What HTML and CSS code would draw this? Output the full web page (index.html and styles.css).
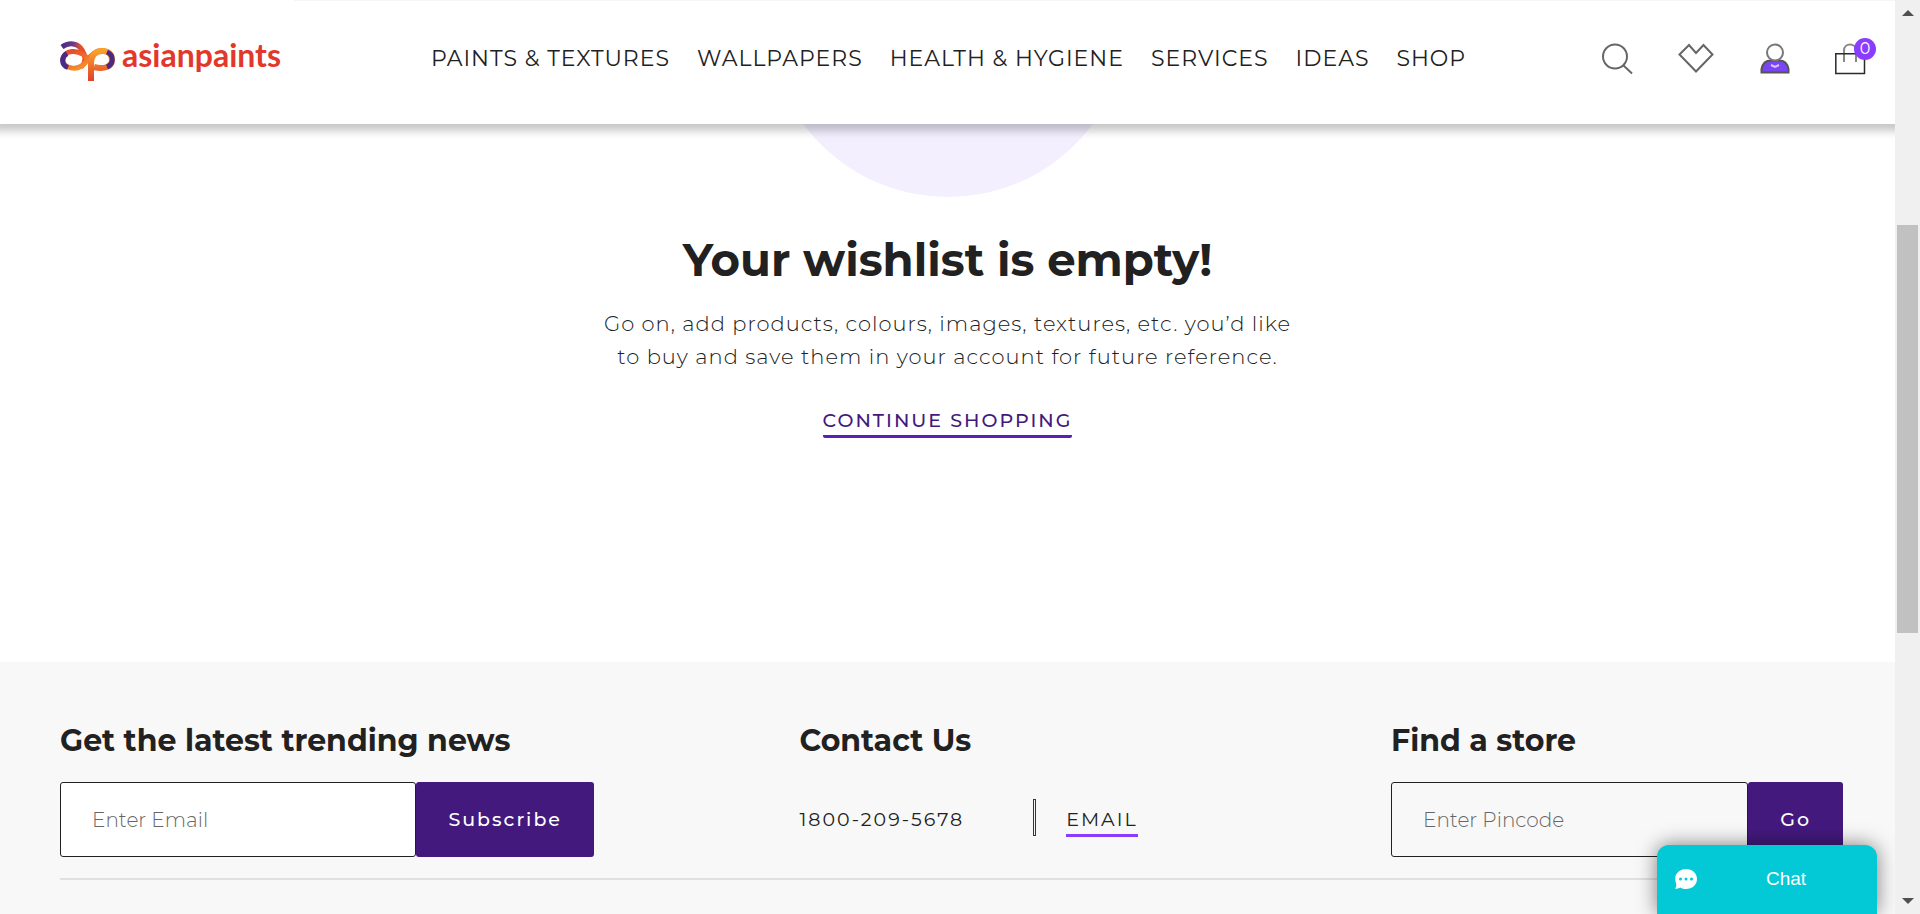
FILE: index.html
```html
<!DOCTYPE html>
<html lang="en">
<head>
<meta charset="utf-8">
<title>Wishlist - Asian Paints</title>
<link rel="stylesheet" href="styles.css">
</head>
<body>
<div class="window">
  <div class="page">
    <header class="header">
      <a class="logo" href="#" aria-label="Asian Paints home">
        <svg class="logo-mark" viewBox="0 0 55 42" width="55" height="42" fill="none" aria-hidden="true">
          <defs>
            <linearGradient id="warm" x1="0" y1="0" x2="1" y2="1"><stop offset="0" stop-color="#e5402b"/><stop offset="1" stop-color="#fbb02c"/></linearGradient>
            <linearGradient id="stem" x1="0" y1="0" x2="0" y2="1"><stop offset="0" stop-color="#f9a12b"/><stop offset="1" stop-color="#e2402b"/></linearGradient>
            <linearGradient id="top" x1="0" y1="0" x2="1" y2="0"><stop offset="0" stop-color="#4b2a86"/><stop offset="0.500" stop-color="#6b3a8a"/><stop offset="0.800" stop-color="#e5502b"/></linearGradient>
          </defs>
          <path d="M2 6C9 1 18 2 22 9C26 15 26 22 21 26" stroke="url(#top)" stroke-width="5"/>
          <path d="M31 22C26 14 19 10 12 10.500C6 11 3 15 3 19C3 27 17 31 25 22C31 13 38 8 45 10" stroke="url(#warm)" stroke-width="5"/>
          <path d="M7 12.500C1 16 1 24 8 26.500" stroke="#4b2a86" stroke-width="5"/>
          <path d="M31 40V22C31 13 37 10 43 10C49 10 52 14 52 19C52 25 45 29 34 26" stroke="url(#stem)" stroke-width="6"/>
          <path d="M47 11C54 14 54 23 47 26" stroke="#4b2a86" stroke-width="5"/>
        </svg>
        <span class="logo-text">asianpaints</span>
      </a>
      <nav class="nav" aria-label="Main">
        <a href="#">PAINTS &amp; TEXTURES</a>
        <a href="#">WALLPAPERS</a>
        <a href="#">HEALTH &amp; HYGIENE</a>
        <a href="#">SERVICES</a>
        <a href="#">IDEAS</a>
        <a href="#">SHOP</a>
      </nav>
      <div class="tools">
        <button class="tool" type="button" aria-label="Search">
          <svg viewBox="0 0 36 36" width="36" height="36" fill="none" stroke="#666" stroke-width="2"><circle cx="16" cy="15.500" r="12"/><path d="M24.500 24.500L33 32.500"/></svg>
        </button>
        <a class="tool" href="#" aria-label="Wishlist">
          <svg viewBox="0 0 36 36" width="36" height="36" fill="none" stroke="#666" stroke-width="2"><path d="M1.500 13.500L11 4L18 12L25.500 4L34.500 13.500L18 30.500Z"/></svg>
        </a>
        <a class="tool" href="#" aria-label="Account">
          <svg viewBox="0 0 36 36" width="36" height="36" fill="none" stroke="#555" stroke-width="2"><path fill="#7b45f5" d="M4.500 31.500V28C5.500 22.500 9 19.500 14 19.500H22C27 19.500 30.500 22.500 31.500 28V31.500Z"/><circle cx="18" cy="11.500" r="8" fill="#fff" stroke="#777"/><path d="M14 24L18 26L22 24" stroke="#d8c8ff"/></svg>
        </a>
        <a class="tool cart" href="#" aria-label="Cart, 0 items">
          <svg viewBox="0 0 36 36" width="36" height="36" fill="none"><path d="M10 21V9.500C10 1.500 22 1.500 22 9.500V21" stroke="#888" stroke-width="2"/><path d="M1.800 12.700H30.500V32.500H1.800Z" stroke="#2b2b2b" stroke-width="1.500"/></svg>
          <span class="badge">0</span>
        </a>
      </div>
    </header>

    <main class="empty">
      <div class="circle"></div>
      <h1>Your wishlist is empty!</h1>
      <p>Go on, add products, colours, images, textures, etc. you’d like<br>to buy and save them in your account for future reference.</p>
      <a class="continue" href="#">CONTINUE SHOPPING</a>
    </main>

    <footer class="footer">
      <div class="footer-row">
        <form class="news">
          <h2><label for="email">Get the latest trending news</label></h2>
          <div class="field">
            <input class="white" id="email" type="email" placeholder="Enter Email">
            <button type="button">Subscribe</button>
          </div>
        </form>
        <section class="contact">
          <h2>Contact Us</h2>
          <div class="contact-row">
            <a href="tel:18002095678">1800-209-5678</a>
            <span class="bar"></span>
            <a class="email" href="#">EMAIL</a>
          </div>
        </section>
        <form class="store">
          <h2><label for="pin">Find a store</label></h2>
          <div class="field">
            <input id="pin" type="text" placeholder="Enter Pincode">
            <button type="button">Go</button>
          </div>
        </form>
      </div>
    </footer>
    <button class="chat" type="button">
      <svg viewBox="0 0 22 20" width="22" height="20" aria-hidden="true"><path fill="#fff" d="M11 0C17 0 22 4 22 10S17 20 11 20C9 20 7 19.500 5.500 18.500C4 19.500 2 20 0 19.500C1.500 18 1.500 16 1 14C-2 6 4 0 11 0Z"/><g fill="#03c8d6"><circle cx="5.500" cy="10" r="1.500"/><circle cx="11" cy="10" r="1.500"/><circle cx="16.500" cy="10" r="1.500"/></g></svg>
      <span>Chat</span>
    </button>
  </div>
  <div class="scrollbar" aria-hidden="true">
    <svg viewBox="0 0 12 6" width="12" height="6"><path fill="#505050" d="M0 6L6 0L12 6Z"/></svg>
    <div class="track"><div class="thumb"></div></div>
    <svg viewBox="0 0 12 6" width="12" height="6"><path fill="#505050" d="M0 0L6 6L12 0Z"/></svg>
  </div>
</div>
</body>
</html>
```

FILE: styles.css
```css
* { box-sizing: border-box; }
body {
  margin: 0;
  color: #212121;
  background: #fff;
  font-family: Montserrat, Inter, sans-serif;
}
a { color: inherit; text-decoration: none; }
button, input { font: inherit; }
h1, h2, p { margin: 0; }

.window { display: flex; height: 100vh; overflow: hidden; }
.page {
  position: relative;
  display: flex;
  flex: 1;
  flex-direction: column;
  overflow: hidden;
}

.header {
  position: relative;
  z-index: 1;
  display: flex;
  flex-shrink: 0;
  align-items: center;
  justify-content: space-between;
  height: 124px;
  padding: 0 25px 6px 60px;
  background: linear-gradient(#f5f5f5, #f5f5f5) 294px 0 / 100% 1px no-repeat #fff;
  box-shadow: 0 0 8px 7px rgba(0, 0, 0, 0.22);
}
.logo {
  display: flex;
  align-items: center;
  gap: 7px;
  width: 238px;
  padding-top: 6px;
}
.logo-mark { flex-shrink: 0; }
.logo-text {
  padding-bottom: 14px;
  color: #e2382c;
  font: 700 32px/32px Lato, sans-serif;
}
.nav {
  display: flex;
  gap: 27px;
  font-size: 22px;
  line-height: 24px;
  letter-spacing: 1px;
  white-space: nowrap;
}
.tools { display: flex; gap: 43px; }
.tool {
  position: relative;
  display: block;
  width: 36px;
  height: 36px;
  padding: 0;
  border: 0;
  background: none;
}
.cart { width: 34px; }
.tool svg { display: block; }
.cart svg { margin-left: -2px; }
.badge {
  position: absolute;
  top: -3px;
  right: -6px;
  width: 22px;
  border-radius: 50%;
  color: #fff;
  background: #8b3dff;
  font-size: 16px;
  line-height: 22px;
  text-align: center;
}

.empty {
  display: flex;
  flex-shrink: 0;
  flex-direction: column;
  align-items: center;
  height: 538px;
  text-align: center;
}
.circle {
  flex-shrink: 0;
  width: 360px;
  height: 360px;
  margin-top: -287px;
  border-radius: 50%;
  background: #f3efff;
}
.empty h1 { margin-top: 35px; font-size: 45px; line-height: 56px; }
.empty p {
  margin-top: 19px;
  font-size: 21px;
  font-weight: 300;
  line-height: 33px;
  letter-spacing: 1px;
}
.continue {
  margin-top: 35px;
  padding-bottom: 1px;
  border-bottom: 3px solid #5a1fb8;
  border-radius: 2px;
  color: #43197e;
  font-size: 19px;
  font-weight: 500;
  line-height: 26px;
  letter-spacing: 2px;
}

.footer { flex: 1; padding: 60px 52px 0 60px; background: #f8f8f8; }
.footer-row {
  display: flex;
  justify-content: space-between;
  padding-bottom: 21px;
  border-bottom: 2px solid #e0e0e0;
}
.footer h2 { font-size: 30px; line-height: 38px; }
.news { width: 534px; }
.contact { width: 386px; }
.store { width: 452px; }
.field { display: flex; height: 75px; margin-top: 22px; }
.field input {
  flex: 1;
  min-width: 0;
  padding: 0 31px;
  border: 1px solid #212121;
  border-radius: 3px;
  background: transparent;
  font-size: 20px;
  font-weight: 300;
}
.field input.white { background: #fff; }
.field input::placeholder { color: #666; }
.field button {
  padding: 0 32px;
  border: 0;
  border-radius: 3px;
  color: #fff;
  background: #43197e;
  font-size: 19px;
  font-weight: 500;
  letter-spacing: 2px;
}
.contact-row {
  display: flex;
  align-items: center;
  height: 75px;
  margin-top: 22px;
  font-size: 19px;
  letter-spacing: 2px;
}
.bar {
  width: 3px;
  height: 37px;
  margin: 0 30px 4px 69px;
  border: 1px solid #800080;
}
.email { padding-top: 3px; border-bottom: 3px solid #8b3dff; line-height: 28px; }

.chat {
  position: absolute;
  right: 18px;
  bottom: 0;
  display: flex;
  align-items: center;
  width: 220px;
  height: 69px;
  padding: 0 18px 2px;
  border: 0;
  border-radius: 12px 12px 0 0;
  color: #fff;
  background: #03c8d6;
  box-shadow: 0 0 20px rgba(0, 0, 0, 0.5);
  font: 19px/24px "Liberation Sans", Arial, sans-serif;
}
.chat span { flex: 1; padding-left: 16px; }

.scrollbar {
  display: flex;
  flex-direction: column;
  align-items: center;
  width: 25px;
  padding: 10px 0;
  background: #f0f0f0;
}
.track { flex: 1; width: 21px; padding-top: 209px; }
.thumb { height: 408px; background: #c1c1c1; }
```
